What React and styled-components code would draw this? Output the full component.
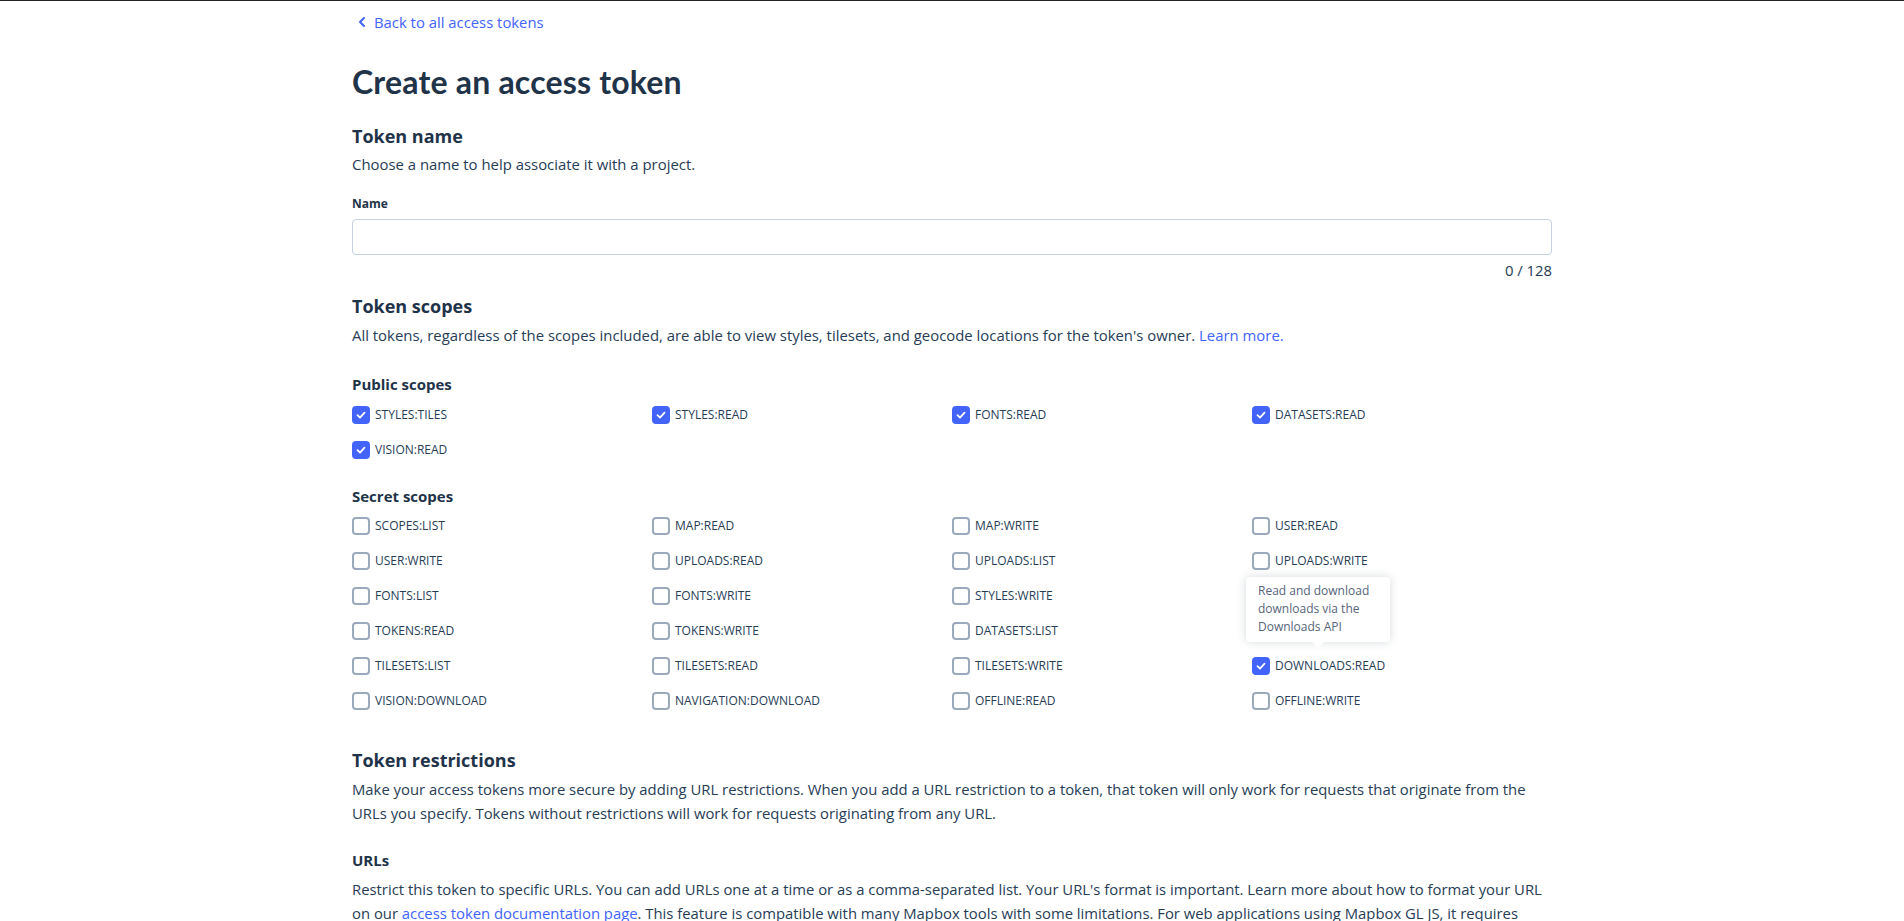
import React from 'react'
import styled, { createGlobalStyle } from 'styled-components'

const GlobalStyle = createGlobalStyle`
  body {
    margin: 0;
    background: #ffffff;
    font-family: "Open Sans", "Liberation Sans", sans-serif;
    color: #273d56;
  }
`

const publicScopes = [
  { name: 'STYLES:TILES', checked: true },
  { name: 'STYLES:READ', checked: true },
  { name: 'FONTS:READ', checked: true },
  { name: 'DATASETS:READ', checked: true },
  { name: 'VISION:READ', checked: true },
]

const secretScopes = [
  { name: 'SCOPES:LIST' },
  { name: 'MAP:READ' },
  { name: 'MAP:WRITE' },
  { name: 'USER:READ' },
  { name: 'USER:WRITE' },
  { name: 'UPLOADS:READ' },
  { name: 'UPLOADS:LIST' },
  { name: 'UPLOADS:WRITE' },
  { name: 'FONTS:LIST' },
  { name: 'FONTS:WRITE' },
  { name: 'STYLES:WRITE' },
  { name: 'STYLES:LIST' },
  { name: 'TOKENS:READ' },
  { name: 'TOKENS:WRITE' },
  { name: 'DATASETS:LIST' },
  { name: 'DATASETS:WRITE', hidden: true },
  { name: 'TILESETS:LIST' },
  { name: 'TILESETS:READ' },
  { name: 'TILESETS:WRITE' },
  { name: 'DOWNLOADS:READ', checked: true, tip: 'Read and download downloads via the Downloads API' },
  { name: 'VISION:DOWNLOAD' },
  { name: 'NAVIGATION:DOWNLOAD' },
  { name: 'OFFLINE:READ' },
  { name: 'OFFLINE:WRITE' },
]

function Scope({ scope }) {
  return (
    <ScopeItem $hidden={scope.hidden}>
      <Box $checked={scope.checked}>
        {scope.checked && (
          <svg width="12" height="12" viewBox="0 0 12 12">
            <polyline points="2.5,6.2 5,8.6 9.5,3.6" fill="none" stroke="#fff" strokeWidth="1.8" strokeLinecap="round" strokeLinejoin="round" />
          </svg>
        )}
      </Box>
      <ScopeLabel>{scope.name}</ScopeLabel>
      {scope.tip && <Tooltip>{scope.tip}</Tooltip>}
    </ScopeItem>
  )
}

export default function App() {
  return (
    <Page>
      <GlobalStyle />
      <Container>
        <BackLink href="#">
          <svg width="8" height="10" viewBox="0 0 8 10">
            <polyline points="6,1 2,5 6,9" fill="none" stroke="#4264fb" strokeWidth="2" strokeLinecap="round" strokeLinejoin="round" />
          </svg>
          Back to all access tokens
        </BackLink>

        <Title>Create an access token</Title>

        <Heading $mt={24}>Token name</Heading>
        <Text $mt={6}>Choose a name to help associate it with a project.</Text>
        <FieldLabel>Name</FieldLabel>
        <Input type="text" />
        <Counter>0 / 128</Counter>

        <Heading $mt={14}>Token scopes</Heading>
        <Text $mt={7}>
          All tokens, regardless of the scopes included, are able to view styles, tilesets, and geocode locations for the token's owner. <Link href="#">Learn more.</Link>
        </Text>

        <SubHeading $mt={29}>Public scopes</SubHeading>
        <ScopeGrid $mt={12}>
          {publicScopes.map((s) => (
            <Scope key={s.name} scope={s} />
          ))}
        </ScopeGrid>

        <SubHeading $mt={27}>Secret scopes</SubHeading>
        <ScopeGrid $mt={11}>
          {secretScopes.map((s) => (
            <Scope key={s.name} scope={s} />
          ))}
        </ScopeGrid>

        <Heading $mt={38}>Token restrictions</Heading>
        <Paragraph>
          Make your access tokens more secure by adding URL restrictions. When you add a URL restriction to a token, that token will only work for requests that originate from the URLs you specify. Tokens without restrictions will work for requests originating from any URL.
        </Paragraph>

        <SubHeading $mt={25}>URLs</SubHeading>
        <Paragraph $mt={7}>
          Restrict this token to specific URLs. You can add URLs one at a time or as a comma-separated list. Your URL's format is important. Learn more about how to format your URL on our <Link href="#">access token documentation page</Link>. This feature is compatible with many Mapbox tools with some limitations. For web applications using Mapbox GL JS, it requires version 0.53.1 or higher. URL restrictions are not supported by every Mapbox SDK.
        </Paragraph>
      </Container>
    </Page>
  )
}

const Page = styled.div`
  border-top: 1px solid #222222;
  min-height: 920px;
`

const Container = styled.div`
  width: 1200px;
  margin: 0 auto;
  padding-top: 9px;
  padding-bottom: 40px;
`

const BackLink = styled.a`
  display: inline-flex;
  align-items: center;
  gap: 8px;
  margin-left: 6px;
  font-size: 14.85px;
  line-height: 20px;
  color: #4264fb;
  text-decoration: none;
`

const Title = styled.h1`
  margin: 32px 0 0;
  font-family: Lato, "Open Sans", sans-serif;
  font-size: 32px;
  line-height: 36px;
  font-weight: 700;
  color: #1f3349;
  letter-spacing: 0.2px;
`

const Heading = styled.h2`
  margin: ${(p) => p.$mt ?? 23}px 0 0;
  font-size: 18px;
  line-height: 24px;
  font-weight: 700;
  color: #1f3349;
`

const SubHeading = styled.h3`
  margin: ${(p) => p.$mt ?? 0}px 0 0;
  font-size: 15px;
  line-height: 20px;
  font-weight: 700;
  color: #1f3349;
`

const Text = styled.p`
  margin: ${(p) => p.$mt ?? 0}px 0 0;
  font-size: 14.9px;
  line-height: 20px;
`

const Paragraph = styled.p`
  margin: ${(p) => p.$mt ?? 5}px 0 0;
  font-size: 14.85px;
  line-height: 24px;
`

const Link = styled.a`
  color: #4264fb;
  text-decoration: none;
`

const FieldLabel = styled.label`
  display: block;
  margin-top: 21px;
  font-size: 12px;
  line-height: 18px;
  font-weight: 700;
  color: #1f3349;
`

const Input = styled.input`
  display: block;
  box-sizing: border-box;
  width: 100%;
  height: 36px;
  margin-top: 6px;
  border: 1px solid #c6d2e1;
  border-radius: 4px;
  padding: 0 10px;
  font: inherit;
  font-size: 15px;
  outline: none;
`

const Counter = styled.div`
  margin-top: 5px;
  text-align: right;
  font-size: 14.85px;
  line-height: 20px;
`

const ScopeGrid = styled.div`
  display: grid;
  grid-template-columns: repeat(4, 300px);
  row-gap: 17px;
  margin-top: ${(p) => p.$mt ?? 11}px;
`

const ScopeItem = styled.div`
  position: relative;
  display: flex;
  align-items: center;
  gap: 5px;
  height: 18px;
  visibility: ${(p) => (p.$hidden ? 'hidden' : 'visible')};
`

const Box = styled.span`
  box-sizing: border-box;
  width: 18px;
  height: 18px;
  flex: none;
  display: flex;
  align-items: center;
  justify-content: center;
  border-radius: 4px;
  background: ${(p) => (p.$checked ? '#4264fb' : '#ffffff')};
  border: 2px solid ${(p) => (p.$checked ? '#4264fb' : '#9aa9bc')};
`

const ScopeLabel = styled.span`
  font-size: 12px;
  line-height: 18px;
  color: #273d56;
`

const Tooltip = styled.div`
  position: absolute;
  left: -6px;
  bottom: calc(100% + 15px);
  box-sizing: border-box;
  width: 144px;
  padding: 5px 12px 6px;
  background: #ffffff;
  border-radius: 4px;
  box-shadow: 0 0 10px rgba(31, 51, 73, 0.18);
  font-size: 12px;
  line-height: 18px;
  color: #56657a;
  z-index: 2;

  &::after {
    content: '';
    position: absolute;
    left: 66px;
    bottom: -6px;
    border-left: 6px solid transparent;
    border-right: 6px solid transparent;
    border-top: 6px solid #ffffff;
  }
`
